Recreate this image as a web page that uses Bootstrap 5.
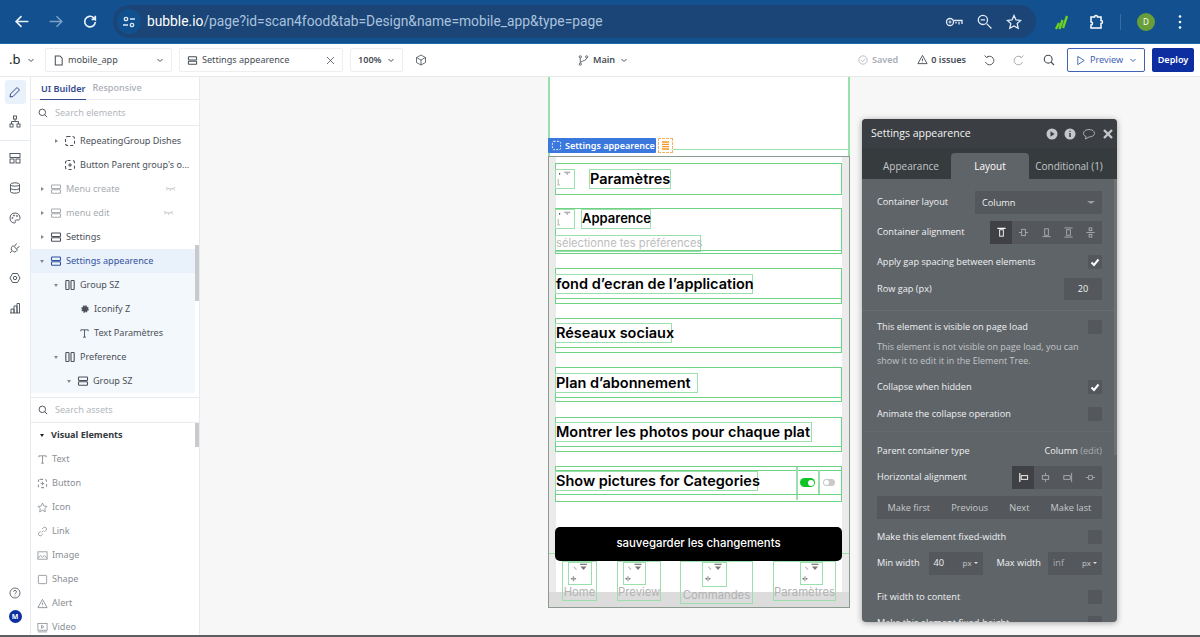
<!DOCTYPE html>
<html lang="en"><head><meta charset="utf-8"><title>Bubble editor</title>
<link href="https://cdn.jsdelivr.net/npm/bootstrap@5.3.0/dist/css/bootstrap.min.css" rel="stylesheet">
<script src="https://cdn.jsdelivr.net/npm/bootstrap@5.3.0/dist/js/bootstrap.bundle.min.js"></script>
<style>
html,body{height:637px;overflow:hidden;background:#fff;font-family:"Noto Sans",sans-serif}
svg{display:block;flex:none;fill:none;stroke:currentColor}
.shell{width:1200px;height:637px;position:relative;overflow:hidden;border-bottom:2px solid #5c5f62}
.chrome{height:44px;background:#12508f;border-bottom:1px solid #1d6aa8;color:#fff;padding-left:12px}
.navbtns{width:101px}
.navbtn{width:20px;margin-right:14px;color:#e8f0f8}
.urlpill{position:relative;width:923px;height:33px;border-radius:17px;background:#1b4576;font-family:Roboto,sans-serif;font-size:13.8px;color:#a9c2dd;white-space:nowrap}
.urlchip{width:24px;height:25px;border-radius:13px;background:#11508f;margin:0 6px 0 4px;color:#dde8f3}
.urlpill b{font-weight:400;color:#fff}
.chromeright{color:#e3ecf5;gap:14px;margin-right:14px}
.tbar{height:33px;background:#fff;border-bottom:1px solid #e9e9ec;font-size:9.1px;color:#454c55;padding-left:9px}
.tbox{height:24px;border:1px solid #eeeef0;border-radius:2px;padding:0 7px}
.blogo{width:11px;font-size:13px;color:#222;margin-right:7px}
.w1{width:127px;margin-left:10px}.w2{width:164px;margin-left:7px}.w3{width:53px;margin-left:7px;font-weight:600}
.grey{color:#a8adb4}
.outline{width:78px;height:24px;margin-left:12px;border:1px solid #3e63b4;border-radius:2px;color:#3e63b4;padding:0 7px 0 8px}
.deploy{width:42px;height:24px;margin:0 6px 0 7px;background:#0d2ea0;color:#fff;border-radius:2px;font-weight:600;text-align:center;line-height:24px}
.workarea{height:558px;position:relative;overflow:hidden}
.rail{width:31px;border-right:1px solid #e6ebf1;color:#454c55;padding-top:3px}
.railitem{height:24px;width:100%;margin-bottom:6px}
.railitem.on{width:21px;height:24px;background:#e9f1fb;border-radius:3px;color:#33488f;margin-bottom:5px}
.raildiv{width:100%;height:1px;background:#e6ebf1;margin:1px 0 5px}
.railfoot{gap:11px;margin-bottom:12px}
.sidebar{width:169px;border-right:1px solid #e6ebf1;font-size:9.1px;color:#4a5058;position:relative}
.tabsrow{height:23px;border-bottom:1px solid #e8ecf1;padding-left:9px;font-weight:600}
.tabon{color:#33488f;height:23px;line-height:24px;border-bottom:1px solid #33488f;padding:0 1px;margin-right:6px}
.taboff{color:#a9aeb4;font-weight:500}
.searchrow{height:26px;border-bottom:1px solid #e8ecf1;padding-left:7px;color:#b3b7bc;gap:7px}
.searchrow svg{color:#454c55}
.tree{height:272px;overflow:hidden;border-bottom:1px solid #e8ecf1;padding-top:3px}
.trow{height:24px;margin-right:4px;white-space:nowrap;gap:4px}
.trow.sel{background:#e9f1fb;color:#33539f}
.tint{background:#f3f8fc}
.dim{color:#a7abb0}
.i1{padding-left:8px}.i2{padding-left:22px}.i4{padding-left:49px}.i5{padding-left:48px}.i3{padding-left:35px}
.arrow{width:7px;height:7px;flex:none}
.arrow::before{content:"";display:block;width:0;height:0;margin:1px 0 0 2px;border-left:3px solid #888;border-top:2.5px solid transparent;border-bottom:2.5px solid transparent}
.arrow.open::before{margin:2px 0 0 1px;border-top:3px solid #888;border-left:2.5px solid transparent;border-right:2.5px solid transparent;border-bottom:0}
.arrow.dark::before{border-top-color:#222}
.arrow.none::before{display:none}
.assethead{height:24px;padding-left:8px;font-weight:700;color:#33373c;gap:5px}
.asset{height:24px;padding-left:6px;color:#8a8f95;gap:4px}
.scrollthumb{position:absolute;right:0;width:4px;background:#c9cacb}
.canvas{width:1000px;background:#f7f7f7;position:relative}
.sheet{position:absolute;left:348px;top:0;width:302px;height:79px;background:#fff;border:solid #9be0ac;border-width:0 2px}
.sheetline{position:absolute;left:472px;top:72px;width:178px;height:1px;background:#9be0ac}
.tag{position:absolute;left:348px;top:61px;height:15px;width:108px;background:#3b78de;color:#fff;font-size:9px;font-weight:600;border-radius:1px;gap:3px;padding-left:3px;white-space:nowrap}
.tagicon{position:absolute;left:458px;top:61px;width:15px;height:15px;background:#fff;border:1px dashed #f2b25c;color:#f09a2a;padding:2px 3px}
.phone{position:absolute;left:348px;top:79px;width:302px;height:452px;border:1px solid #8c9a90;background:#ebebeb;font-family:Inter,sans-serif;color:#000}
.phonein{position:absolute;left:7px;top:0;width:286px;height:436px;background:#fff}
.rowbox{position:absolute;left:6px;width:287px;border:1px solid #6fd384}
.lbl{position:absolute;left:6px;border:1px solid #9be0ac;font-size:14.5px;font-weight:600;line-height:18px;white-space:nowrap;padding-left:0}
.lblsm{font-size:13px;line-height:16px}
.lblsub{font-size:11.2px;font-weight:400;color:#bdbdbd;line-height:15px;letter-spacing:-.02px;padding:0}
.hr1{position:absolute;left:6px;width:287px;height:1px;background:#6fd384}
.ph{position:absolute;border:1px solid #9be0ac;background:#fff;color:#777}
.savebtn{position:absolute;left:6px;top:370px;width:287px;height:34px;background:#000;color:#fff;border-radius:5px;font-size:11.4px;font-weight:500;text-align:center;line-height:33px;z-index:3}
.navtint{position:absolute;left:0;right:0;top:435px;bottom:0;background:#dcdcdc}
.navline{position:absolute;left:0;right:0;top:396px;height:1px;background:#9be0ac}
.navlbl{position:absolute;border:1px solid #9be0ac;color:#b2b2b2;font-size:11.3px;text-align:center;line-height:15px;white-space:nowrap;box-sizing:border-box;padding-top:23px}
.panel{position:absolute;left:862px;top:42px;width:255px;height:503px;background:#5f6469;border-radius:4px;overflow:hidden;box-shadow:0 1px 6px rgba(0,0,0,.35);font-family:"Open Sans",sans-serif;font-size:9.2px;color:#f0f1f2}
.phead{height:29px;background:#3b3f43;padding:1px 3px 0 9px;font-size:10.5px;color:#f4f4f4;gap:6px}
.ptabs{height:31px;background:#363b3e;font-size:10px;color:#c4c8cb;padding-top:5px}
.ptab{height:26px;line-height:26px;text-align:center}
.ptab.on{background:#5f6469;border-radius:4px 4px 0 0;color:#fff}
.ptab1{width:89px;padding-left:9px}.ptab2{width:78px}.ptab3{width:88px;padding-right:8px}
.pbody{padding:8px 15px 0 15px;position:relative;height:443px;overflow:hidden}
.pr{height:30px}
.h24{height:24px}.h26{height:26px}.h28{height:28px}
.selectbox{width:127px;height:23px;background:#54585c;padding:0 7px;color:#eee;line-height:23px}
.caret{width:0;height:0;border-top:3px solid #9a9ea2;border-left:4px solid transparent;border-right:4px solid transparent}
.caretsm{border-top-color:#ddd;border-width:2.5px 2px 0}
.grp{height:23px;background:#54585c}
.grp4{width:90px}
.seg{width:22.4px;height:23px;color:#b2b6b9}
.seg.on{background:#3f4144;color:#fff}
.cb{width:14px;height:14px;background:#54585c;border-radius:1px;color:#fff}
.numbox{width:38px;height:22px;background:#54585c;text-align:center;line-height:22px}
.divi{height:1px;background:#686d72;margin:0 -15px}
.note{color:#c1c5c8;line-height:14px;height:28px;font-size:9px;margin-top:-1px}
.movebar{height:23px;background:#54585c;color:#c5c8cb;margin-top:6px;margin-bottom:5px}
.inp{width:54px;height:23px;background:#54585c;padding:0 5px}
.pxs{font-size:8px;color:#c5c8cb;gap:2px}
.pthumb{position:absolute;right:0;top:0;width:3px;height:276px;background:#6d7276}
.edit{color:#a8acb0}
</style></head><body>
<svg width="0" height="0" style="position:absolute">
<symbol id="chev" viewBox="0 0 8 8"><path d="M1.500 3l2.500 2.500L6.500 3" stroke-width="1"/></symbol>
<symbol id="grp" viewBox="0 0 12 12"><rect x="1.500" y="2" width="9" height="3.500" rx=".7" stroke-width="1.100"/><rect x="1.500" y="6.700" width="9" height="3.500" rx=".7" stroke-width="1.100"/></symbol>
<symbol id="colm" viewBox="0 0 12 12"><rect x="1.800" y="1.500" width="3.200" height="9" rx=".7" stroke-width="1.100"/><rect x="7" y="1.500" width="3.200" height="9" rx=".7" stroke-width="1.100"/></symbol>
<symbol id="dash" viewBox="0 0 12 12"><rect x="1.500" y="1.500" width="9" height="9" rx="2" stroke-width="1.100" stroke-dasharray="3 2"/></symbol>
<symbol id="dashp" viewBox="0 0 12 12"><rect x="1.500" y="1.500" width="9" height="9" rx="2" stroke-width="1.100" stroke-dasharray="3 2.500"/><path d="M6 4v4M4 6h4" stroke-width="1"/></symbol>
<symbol id="tee" viewBox="0 0 12 12"><path d="M2 3.500V2h8v1.500M6 2v8M4.500 10h3" stroke-width="1"/></symbol>
<symbol id="mag" viewBox="0 0 12 12"><circle cx="5.200" cy="5.200" r="3.900" stroke-width="1.100"/><path d="M8 8l3 3" stroke-width="1.100"/></symbol>
<symbol id="eyec" viewBox="0 0 12 6"><path d="M1 1c2 2.500 8 2.500 10 0M2.500 3L1.500 4.500M6 3.500v1.500M9.500 3l1 1.500" stroke-width=".8"/></symbol>
<symbol id="broken" viewBox="0 0 20 20"><path d="M4 3.500v1.500" stroke="#222" stroke-width="1.300"/><path d="M9 2.500h7" stroke="#888" stroke-width="1"/><path d="M11.500 4h2l-1 1z" fill="#888" stroke="#888" stroke-width=".5"/><path d="M2.500 10v6M1.500 16.500h3" stroke="#aaa" stroke-width="1"/></symbol>
<symbol id="brokennav" viewBox="0 0 24 24"><path d="M5 4.500l3 3" stroke="#bbb" stroke-width="1.400"/><path d="M12 1.500h8" stroke="#777" stroke-width="1.400"/><path d="M12.500 4h7L16 8z" fill="#777" stroke="none"/><path d="M4.500 15v6" stroke="#777" stroke-width=".9"/><path d="M3.500 16.500L1 18l2.500 1.500zM5.500 16.500L8 18l-2.500 1.500z" fill="#777" stroke="none"/></symbol>
<symbol id="tri" viewBox="0 0 12 12"><path d="M6 1.500L11 10.500H1zM6 5v2.500M6 8.500v.6" stroke-width="1"/></symbol>
<symbol id="tick" viewBox="0 0 14 14"><path d="M3.500 7.500L6 10l4.500-5.500" stroke-width="2"/></symbol>
</svg>
<div class="shell">
 <div class="chrome d-flex align-items-center">
  <div class="navbtns d-flex align-items-center">
   <svg class="navbtn" width="17" height="17" viewBox="0 0 16 16"><path d="M14 8H2.500M7.500 3L2.500 8l5 5" stroke-width="1.600"/></svg>
   <svg class="navbtn opacity-50" width="17" height="17" viewBox="0 0 16 16"><path d="M2 8h11.500M8.500 3l5 5-5 5" stroke-width="1.400"/></svg>
   <svg class="navbtn" width="17" height="17" viewBox="0 0 16 16"><path d="M13 8.500A5 5 0 1 1 11.500 4.500L13 6V2.500M13 6H9.500" stroke-width="1.600"/></svg>
  </div>
  <div class="urlpill d-flex align-items-center">
   <span class="urlchip d-flex align-items-center justify-content-center"><svg width="14" height="14" viewBox="0 0 14 14"><circle cx="4" cy="4" r="1.700" stroke-width="1.300"/><path d="M8 4h5M1 10h5" stroke-width="1.300"/><circle cx="10" cy="10" r="1.700" stroke-width="1.300"/></svg></span>
   <span><b>bubble.io</b>/page?id=scan4food&amp;tab=Design&amp;name=mobile_app&amp;type=page</span>
   <span class="chromeright d-flex align-items-center ms-auto">
    <svg width="18" height="14" viewBox="0 0 18 14"><circle cx="5" cy="7" r="3.500" stroke-width="1.300"/><circle cx="5" cy="7" r="1" stroke-width="1"/><path d="M8.500 5.500H17V9M14 7v2.500M11 7v1.500" stroke-width="1.300"/></svg>
    <svg width="15" height="15" viewBox="0 0 14 14"><circle cx="5.500" cy="5.500" r="4.300" stroke-width="1.200"/><path d="M9 9l4.500 4.500M3.500 5.500h4" stroke-width="1.200"/></svg>
    <svg width="16" height="16" viewBox="0 0 16 16"><path d="M8 1.500l2 4.400 4.700.5-3.500 3.200 1 4.700L8 11.900l-4.200 2.400 1-4.700L1.300 6.400 6 5.900z" stroke-width="1.300"/></svg>
   </span>
  </div>
  <svg style="margin-left:18px" width="16" height="16" viewBox="0 0 16 16"><path d="M2 15L5 9M5.500 15L8.500 6M9 14L13 2" stroke="#6fd021" stroke-width="2.400"/></svg>
  <svg style="margin-left:18px" width="16" height="16" viewBox="0 0 16 16"><path d="M3 3h3.500a1.500 1.500 0 0 1 3 0H13v3.500a1.500 1.500 0 0 1 0 3V14H3v-3a1.500 1.500 0 0 0 0-3z" stroke-width="1.500"/></svg>
  <span style="margin-left:16px;width:1px;height:16px;background:#3b6c9f"></span>
  <span class="rounded-circle text-center" style="margin-left:16px;width:18px;height:18px;background:#6a9e3a;font-size:8px;line-height:18px">D</span>
  <svg style="margin-left:23px" width="4" height="16" viewBox="0 0 4 16"><circle cx="2" cy="2.500" r="1.300" fill="#fff" stroke="none"/><circle cx="2" cy="8" r="1.300" fill="#fff" stroke="none"/><circle cx="2" cy="13.500" r="1.300" fill="#fff" stroke="none"/></svg>
 </div>
 <div class="tbar d-flex align-items-center">
  <span class="blogo">.b</span>
  <svg width="8" height="8"><use href="#chev"/></svg>
  <div class="tbox w1 d-flex align-items-center"><svg width="11" height="11" viewBox="0 0 12 12"><path d="M2.500 1h5l2.500 2.500V11h-7.500z" stroke-width="1.100"/></svg><span class="ms-1">mobile_app</span><svg class="ms-auto" width="8" height="8"><use href="#chev"/></svg></div>
  <div class="tbox w2 d-flex align-items-center"><svg width="11" height="11"><use href="#grp"/></svg><span class="ms-1">Settings appearence</span><svg class="ms-auto" width="9" height="9" viewBox="0 0 9 9"><path d="M1 1l7 7M8 1L1 8" stroke-width=".8"/></svg></div>
  <div class="tbox w3 d-flex align-items-center"><span>100%</span><svg class="ms-auto" width="8" height="8"><use href="#chev"/></svg></div>
  <svg style="margin-left:12px" width="12" height="12" viewBox="0 0 12 12"><path d="M6 1l4.500 2.500v5L6 11 1.500 8.500v-5zM1.500 3.500L6 6l4.500-2.500M6 6v5" stroke-width=".8"/></svg>
  <svg style="margin-left:151px" width="11" height="11" viewBox="0 0 12 12"><circle cx="2.500" cy="2" r="1.200" stroke-width=".9"/><circle cx="2.500" cy="10" r="1.200" stroke-width=".9"/><circle cx="9.500" cy="2" r="1.200" stroke-width=".9"/><path d="M2.500 3.500v5M9.500 3.500C9.500 6 5 6 3 8" stroke-width=".9"/></svg>
  <span class="fw-semibold" style="margin-left:4px">Main</span>
  <svg style="margin-left:5px" width="8" height="8"><use href="#chev"/></svg>
  <span class="d-flex align-items-center grey ms-auto" style="gap:4px"><svg width="10" height="10" viewBox="0 0 12 12"><circle cx="6" cy="6" r="5" stroke-width=".9"/><path d="M3.500 6l2 2 3-3.500" stroke-width=".9"/></svg><span class="fw-semibold">Saved</span></span>
  <span class="d-flex align-items-center fw-semibold" style="gap:3px;margin-left:19px"><svg width="11" height="11"><use href="#tri"/></svg><span>0 issues</span></span>
  <svg style="margin-left:17px" width="12" height="12" viewBox="0 0 12 12"><path d="M3.500 3.500A4.300 4.300 0 1 1 2.500 8M1.500 1.500l2 2 2-1" stroke-width=".9"/></svg>
  <svg class="opacity-50" style="margin-left:18px" width="12" height="12" viewBox="0 0 12 12"><path d="M8.500 3.500A4.300 4.300 0 1 0 9.500 8M10.500 1.500l-2 2-2-1" stroke-width=".9"/></svg>
  <svg style="margin-left:18px" width="12" height="12"><use href="#mag"/></svg>
  <div class="outline d-flex align-items-center"><svg width="10" height="11" viewBox="0 0 10 12"><path d="M1.500 1.500L8.500 6l-7 4.500z" stroke-width="1"/></svg><span class="ms-1">Preview</span><svg class="ms-auto" width="8" height="8"><use href="#chev"/></svg></div>
  <div class="deploy">Deploy</div>
 </div>
 <div class="workarea d-flex">
  <div class="rail d-flex flex-column align-items-center">
   <div class="railitem on d-flex align-items-center justify-content-center"><svg width="12" height="12" viewBox="0 0 12 12"><path d="M8 1.500l2.500 2.500-6.500 6.500-3 .5.500-3z" stroke-width="1"/></svg></div>
   <div class="railitem d-flex align-items-center justify-content-center"><svg width="12" height="13" viewBox="0 0 12 13"><rect x="4.500" y="1" width="3" height="3" stroke-width=".9"/><rect x="1" y="9" width="3" height="3" stroke-width=".9"/><rect x="8" y="9" width="3" height="3" stroke-width=".9"/><path d="M6 4v2.500M2.500 9V6.500h7V9" stroke-width=".9"/></svg></div>
   <div class="raildiv"></div>
   <div class="railitem d-flex align-items-center justify-content-center"><svg width="12" height="12" viewBox="0 0 12 12"><rect x="1" y="1.500" width="10" height="4" stroke-width=".9"/><rect x="1" y="7" width="4" height="4" stroke-width=".9"/><rect x="7" y="7" width="4" height="4" stroke-width=".9"/></svg></div>
   <div class="railitem d-flex align-items-center justify-content-center"><svg width="12" height="12" viewBox="0 0 12 12"><ellipse cx="6" cy="2.500" rx="4.500" ry="1.700" stroke-width=".9"/><path d="M1.500 2.500v7c0 2.200 9 2.200 9 0v-7M1.500 6c0 2.200 9 2.200 9 0" stroke-width=".9"/></svg></div>
   <div class="railitem d-flex align-items-center justify-content-center"><svg width="12" height="12" viewBox="0 0 12 12"><path d="M6 1C3 1 1 3 1 6s2 5 4.500 5c1 0 1-1 .7-1.700-.3-.8.300-1.300 1-1.300h2.300C10.500 8 11 7 11 6c0-3-2-5-5-5z" stroke-width=".9"/><circle cx="3.500" cy="6" r=".6" stroke-width=".8"/><circle cx="5" cy="3.500" r=".6" stroke-width=".8"/><circle cx="8" cy="4" r=".6" stroke-width=".8"/></svg></div>
   <div class="railitem d-flex align-items-center justify-content-center"><svg width="12" height="12" viewBox="0 0 12 12"><path d="M4 3.500L8.500 8 7 9.500C5.500 10.500 3.500 9.500 2.500 8 1.800 6.500 2.500 5 4 3.500zM5.500 4.500L7.500 1.500M7.500 6.500L10.500 4.500M2.800 9.200L1 11" stroke-width=".9"/></svg></div>
   <div class="railitem d-flex align-items-center justify-content-center"><svg width="12" height="12" viewBox="0 0 12 12"><path d="M3.500 1.500h5L11 6 8.500 10.500h-5L1 6z" stroke-width=".9"/><circle cx="6" cy="6" r="1.700" stroke-width=".9"/></svg></div>
   <div class="railitem d-flex align-items-center justify-content-center"><svg width="12" height="12" viewBox="0 0 12 12"><path d="M1 11h10M2 11V7h3v4M5 11V4h3v7M8 11V1.500h2.500V11" stroke-width=".9"/></svg></div>
   <div class="railfoot d-flex flex-column align-items-center mt-auto">
    <svg width="12" height="12" viewBox="0 0 12 12"><circle cx="6" cy="6" r="5" stroke-width=".8"/><path d="M4.500 4.700C4.500 3 7.500 3 7.500 4.700 7.500 6 6 5.800 6 7.200M6 8.500v.8" stroke-width=".8"/></svg>
    <span class="rounded-circle text-center text-white fw-bold" style="width:13px;height:13px;background:#0d2ea0;font-size:7px;line-height:13px">M</span>
   </div>
  </div>
  <div class="sidebar">
   <div class="tabsrow d-flex align-items-center"><span class="tabon">UI Builder</span><span class="taboff">Responsive</span></div>
   <div class="searchrow d-flex align-items-center"><svg width="10" height="10"><use href="#mag"/></svg><span>Search elements</span></div>
   <div class="tree">
    <div class="trow i2 d-flex align-items-center"><span class="arrow"></span><svg width="12" height="12"><use href="#dash"/></svg><span>RepeatingGroup Dishes</span></div>
    <div class="trow i2 d-flex align-items-center"><span class="arrow none"></span><svg width="12" height="12"><use href="#dashp"/></svg><span>Button Parent group's o...</span></div>
    <div class="trow i1 dim d-flex align-items-center"><span class="arrow"></span><svg width="12" height="12"><use href="#grp"/></svg><span>Menu create</span><svg style="margin-left:41px" width="11" height="6"><use href="#eyec"/></svg></div>
    <div class="trow i1 dim d-flex align-items-center"><span class="arrow"></span><svg width="12" height="12"><use href="#grp"/></svg><span>menu edit</span><svg style="margin-left:49px" width="11" height="6"><use href="#eyec"/></svg></div>
    <div class="trow i1 d-flex align-items-center"><span class="arrow"></span><svg width="12" height="12"><use href="#grp"/></svg><span>Settings</span></div>
    <div class="trow sel i1 d-flex align-items-center"><span class="arrow open"></span><svg width="12" height="12"><use href="#grp"/></svg><span>Settings appearence</span></div>
    <div class="trow tint i2 d-flex align-items-center"><span class="arrow open"></span><svg width="12" height="12"><use href="#colm"/></svg><span>Group SZ</span></div>
    <div class="trow tint i4 d-flex align-items-center"><svg width="10" height="10" viewBox="0 0 10 10"><circle cx="5" cy="5" r="2.800" fill="currentColor" stroke-width="1.800" stroke-dasharray="1.400 .8"/></svg><span>Iconify Z</span></div>
    <div class="trow tint i5 d-flex align-items-center"><svg width="11" height="11"><use href="#tee"/></svg><span>Text Paramètres</span></div>
    <div class="trow tint i2 d-flex align-items-center"><span class="arrow open"></span><svg width="12" height="12"><use href="#colm"/></svg><span>Preference</span></div>
    <div class="trow tint i3 d-flex align-items-center"><span class="arrow open"></span><svg width="12" height="12"><use href="#grp"/></svg><span>Group SZ</span></div>
   </div>
   <div class="searchrow d-flex align-items-center" style="height:25px"><svg width="10" height="10"><use href="#mag"/></svg><span>Search assets</span></div>
   <div class="assethead d-flex align-items-center"><span class="arrow open dark"></span><span>Visual Elements</span></div>
   <div class="asset d-flex align-items-center"><svg width="11" height="11"><use href="#tee"/></svg><span>Text</span></div>
   <div class="asset d-flex align-items-center"><svg width="11" height="11"><use href="#dashp"/></svg><span>Button</span></div>
   <div class="asset d-flex align-items-center"><svg width="11" height="11" viewBox="0 0 16 16"><path d="M8 1.500l2 4.400 4.700.5-3.500 3.200 1 4.700L8 11.900l-4.200 2.400 1-4.700L1.300 6.400 6 5.900z" stroke-width="1.200"/></svg><span>Icon</span></div>
   <div class="asset d-flex align-items-center"><svg width="11" height="11" viewBox="0 0 12 12"><path d="M5 7l2-2M4 5.500L2 7.500a2 2 0 0 0 2.800 2.800L6.500 8.500M8 6.500l2-2A2 2 0 0 0 7.200 1.700L5.500 3.500" stroke-width=".9"/></svg><span>Link</span></div>
   <div class="asset d-flex align-items-center"><svg width="11" height="11" viewBox="0 0 12 12"><rect x="1" y="2" width="10" height="8" stroke-width=".9"/><path d="M1 9l3-3 2 2 2-2 3 3" stroke-width=".9"/></svg><span>Image</span></div>
   <div class="asset d-flex align-items-center"><svg width="11" height="11" viewBox="0 0 12 12"><rect x="1.500" y="1.500" width="9" height="9" rx=".8" stroke-width=".9"/></svg><span>Shape</span></div>
   <div class="asset d-flex align-items-center"><svg width="11" height="11"><use href="#tri"/></svg><span>Alert</span></div>
   <div class="asset d-flex align-items-center"><svg width="11" height="11" viewBox="0 0 12 12"><rect x="1" y="1.500" width="10" height="7.500" stroke-width=".9"/><path d="M5 3.500l2.500 1.700L5 7zM1 10.800h10" stroke-width=".9"/></svg><span>Video</span></div>
   <div class="scrollthumb" style="top:168px;height:56px"></div>
   <div class="scrollthumb" style="top:346px;height:24px"></div>
  </div>
  <div class="canvas">
   <div class="sheet"></div>
   <div class="sheetline"></div>
   <div class="tag d-flex align-items-center"><svg width="11" height="11" viewBox="0 0 12 12"><rect x="1.500" y="1.500" width="9" height="9" rx="1.500" stroke-width="1" stroke-dasharray="2 1.500"/></svg><span>Settings appearence</span></div>
   <div class="tagicon"><svg width="7" height="9" viewBox="0 0 7 9"><path d="M0 1h7M0 3.300h7M0 5.600h7M0 8h7" stroke-width="1.300"/></svg></div>
   <div class="phone">
    <div class="phonein"></div>
    <div class="navtint"></div>
    <div class="rowbox" style="top:6px;height:32px"></div>
    <div class="ph" style="left:6px;top:12px;width:20px;height:20px"><svg width="18" height="18"><use href="#broken"/></svg></div>
    <div class="lbl" style="top:12px;left:40px;width:82px;height:20px">Paramètres</div>
    <div class="rowbox" style="top:51px;height:46px"></div>
    <div class="ph" style="left:6px;top:52px;width:20px;height:20px"><svg width="18" height="18"><use href="#broken"/></svg></div>
    <div class="lbl lblsm" style="top:52px;left:32px;width:70px;height:20px">Apparence</div>
    <div class="lbl lblsub" style="top:78px;left:6px;width:146px;height:17px">sélectionne tes préférences</div>
    <div class="hr1" style="top:93px"></div>
    <div class="rowbox" style="top:111px;height:36px"></div>
    <div class="lbl" style="top:117px;width:198px;height:20px">fond d’ecran de l’application</div>
    <div class="hr1" style="top:141px"></div>
    <div class="rowbox" style="top:161px;height:35px"></div>
    <div class="lbl" style="top:166px;width:117px;height:20px">Réseaux sociaux</div>
    <div class="hr1" style="top:190px"></div>
    <div class="rowbox" style="top:210px;height:35px"></div>
    <div class="lbl" style="top:216px;width:143px;height:20px">Plan d’abonnement</div>
    <div class="hr1" style="top:240px"></div>
    <div class="rowbox" style="top:260px;height:35px"></div>
    <div class="lbl" style="top:265px;width:257px;height:20px">Montrer les photos pour chaque plat</div>
    <div class="hr1" style="top:289px"></div>
    <div class="rowbox" style="top:309px;height:36px"></div>
    <div class="hr1" style="top:313px"></div>
    <div class="lbl" style="top:314px;width:203px;height:20px">Show pictures for Categories</div>
    <div class="ph" style="left:247px;top:310px;width:1px;height:33px;padding:0"></div>
    <div class="ph" style="left:269px;top:313px;width:1px;height:24px;padding:0"></div>
    <div class="hr1" style="top:337px"></div>
    <div class="d-flex align-items-center position-absolute" style="left:251px;top:321px;width:15px;height:9px;background:#0fc424;border-radius:5px"><span style="width:6px;height:6px;border-radius:50%;background:#fff;margin-left:8px"></span></div>
    <div class="d-flex align-items-center position-absolute" style="left:274px;top:322px;width:12px;height:7px;background:#c9c9c9;border-radius:4px"><span style="width:5px;height:5px;border-radius:50%;background:#fff;margin-left:1px"></span></div>
    <div class="navline"></div>
    <div class="savebtn">sauvegarder les changements</div>
    <div class="ph" style="left:19px;top:405px;width:24px;height:23px;z-index:1"><svg width="22" height="21"><use href="#brokennav"/></svg></div>
    <div class="ph" style="left:74px;top:405px;width:23px;height:23px;z-index:1"><svg width="21" height="21"><use href="#brokennav"/></svg></div>
    <div class="ph" style="left:153px;top:405px;width:25px;height:25px;z-index:1"><svg width="23" height="21"><use href="#brokennav"/></svg></div>
    <div class="ph" style="left:251px;top:405px;width:23px;height:23px;z-index:1"><svg width="21" height="21"><use href="#brokennav"/></svg></div>
    <div class="navlbl" style="left:13px;top:404px;width:35px;height:40px">Home</div>
    <div class="navlbl" style="left:68px;top:404px;width:44px;height:40px">Preview</div>
    <div class="navlbl" style="left:131px;top:404px;width:73px;height:43px;padding-top:26px">Commandes</div>
    <div class="navlbl" style="left:224px;top:404px;width:63px;height:40px">Paramètres</div>
   </div>
  </div>
  <div class="panel">
   <div class="phead d-flex align-items-center">
    <span class="me-auto">Settings appearence</span>
    <svg width="12" height="12" viewBox="0 0 12 12"><circle cx="6" cy="6" r="5.500" fill="#c5c8ca" stroke="none"/><path d="M4.500 3.300l4 2.700-4 2.700z" fill="#3b3f43" stroke="none"/></svg>
    <svg width="12" height="12" viewBox="0 0 12 12"><circle cx="6" cy="6" r="5.500" fill="#c5c8ca" stroke="none"/><path d="M6 5v4M6 2.700v1.100" stroke="#3b3f43" stroke-width="1.500"/></svg>
    <svg width="14" height="12" viewBox="0 0 14 12" style="color:#c5c8ca"><path d="M7 1.500c3.300 0 5.500 1.700 5.500 3.800S10.300 9 7 9L3.500 11l.5-2.500C2.500 8 1.500 6.800 1.500 5.300 1.500 3.200 3.700 1.500 7 1.500z" stroke-width=".8"/></svg>
    <svg width="12" height="12" viewBox="0 0 12 12" style="color:#c5c8ca"><path d="M2 2l8 8M10 2l-8 8" stroke-width="2.400"/></svg>
   </div>
   <div class="ptabs d-flex">
    <div class="ptab ptab1">Appearance</div>
    <div class="ptab ptab2 on">Layout</div>
    <div class="ptab ptab3">Conditional (1)</div>
   </div>
   <div class="pbody">
    <div class="pr d-flex align-items-center justify-content-between"><span>Container layout</span><span class="selectbox d-flex align-items-center justify-content-between"><span>Column</span><i class="caret"></i></span></div>
    <div class="pr d-flex align-items-center justify-content-between"><span>Container alignment</span>
     <span class="grp d-flex">
      <span class="seg on d-flex align-items-center justify-content-center"><svg width="11" height="11" viewBox="0 0 12 12"><path d="M1.500 1.500h9" stroke-width="1.200"/><rect x="4" y="3" width="4" height="7" stroke-width="1"/></svg></span>
      <span class="seg d-flex align-items-center justify-content-center"><svg width="11" height="11" viewBox="0 0 12 12"><path d="M1 6h2.500M8.500 6H11" stroke-width=".9"/><rect x="4" y="2.500" width="4" height="7" stroke-width=".9"/></svg></span>
      <span class="seg d-flex align-items-center justify-content-center"><svg width="11" height="11" viewBox="0 0 12 12"><path d="M1.500 10.500h9" stroke-width=".9"/><rect x="4" y="2" width="4" height="7" stroke-width=".9"/></svg></span>
      <span class="seg d-flex align-items-center justify-content-center"><svg width="11" height="11" viewBox="0 0 12 12"><path d="M1.500 1h9M1.500 11h9" stroke-width=".9"/><rect x="4" y="3" width="4" height="6" stroke-width=".9"/></svg></span>
      <span class="seg d-flex align-items-center justify-content-center"><svg width="11" height="11" viewBox="0 0 12 12"><path d="M1.500 6h9" stroke-width=".9"/><rect x="4.500" y="1" width="3" height="3" stroke-width=".9"/><rect x="4.500" y="8" width="3" height="3" stroke-width=".9"/></svg></span>
     </span></div>
    <div class="pr d-flex align-items-center justify-content-between"><span>Apply gap spacing between elements</span><span class="cb"><svg width="14" height="14"><use href="#tick"/></svg></span></div>
    <div class="h24 d-flex align-items-center justify-content-between"><span>Row gap (px)</span><span class="numbox">20</span></div>
    <div class="divi" style="margin-top:9px"></div>
    <div class="h28 d-flex align-items-center justify-content-between" style="margin-top:2px"><span>This element is visible on page load</span><span class="cb"></span></div>
    <div class="note">This element is not visible on page load, you can<br>show it to edit it in the Element Tree.</div>
    <div class="h28 d-flex align-items-center justify-content-between" style="margin-top:5px"><span>Collapse when hidden</span><span class="cb"><svg width="14" height="14"><use href="#tick"/></svg></span></div>
    <div class="h26 d-flex align-items-center justify-content-between"><span>Animate the collapse operation</span><span class="cb"></span></div>
    <div class="divi" style="margin-top:4px;opacity:.6"></div>
    <div class="h26 d-flex align-items-center justify-content-between" style="margin-top:6px"><span>Parent container type</span><span>Column <span class="edit">(edit)</span></span></div>
    <div class="h26 d-flex align-items-center justify-content-between"><span>Horizontal alignment</span>
     <span class="grp grp4 d-flex">
      <span class="seg on d-flex align-items-center justify-content-center"><svg width="11" height="11" viewBox="0 0 12 12"><path d="M2 1v10" stroke-width="1.200"/><rect x="3.500" y="4" width="7" height="4" stroke-width="1"/></svg></span>
      <span class="seg d-flex align-items-center justify-content-center"><svg width="11" height="11" viewBox="0 0 12 12"><path d="M6 1v2.500M6 8.500V11" stroke-width=".9"/><rect x="2.500" y="4" width="7" height="4" stroke-width=".9"/></svg></span>
      <span class="seg d-flex align-items-center justify-content-center"><svg width="11" height="11" viewBox="0 0 12 12"><path d="M10.500 1v10" stroke-width=".9"/><rect x="2" y="4" width="7" height="4" stroke-width=".9"/></svg></span>
      <span class="seg d-flex align-items-center justify-content-center"><svg width="11" height="11" viewBox="0 0 12 12"><path d="M1 6h2.500M8.500 6H11" stroke-width=".9"/><rect x="4" y="4" width="4" height="4" stroke-width=".9"/></svg></span>
     </span></div>
    <div class="movebar d-flex align-items-center justify-content-around"><span>Make first</span><span>Previous</span><span>Next</span><span>Make last</span></div>
    <div class="h26 d-flex align-items-center justify-content-between"><span>Make this element fixed-width</span><span class="cb"></span></div>
    <div class="h26 d-flex align-items-center"><span>Min width</span>
     <span class="inp d-flex align-items-center justify-content-between" style="margin-left:9px"><span>40</span><span class="pxs d-flex align-items-center">px<i class="caret caretsm"></i></span></span>
     <span class="ms-auto">Max width</span>
     <span class="inp d-flex align-items-center justify-content-between" style="margin-left:7px"><span class="edit">inf</span><span class="pxs d-flex align-items-center">px<i class="caret caretsm"></i></span></span></div>
    <div class="h26 d-flex align-items-center justify-content-between" style="margin-top:8px"><span>Fit width to content</span><span class="cb"></span></div>
    <div class="h26 d-flex align-items-center justify-content-between"><span>Make this element fixed-height</span><span class="cb"></span></div>
    <div class="pthumb"></div>
   </div>
  </div>
 </div>
</div>
</body></html>
